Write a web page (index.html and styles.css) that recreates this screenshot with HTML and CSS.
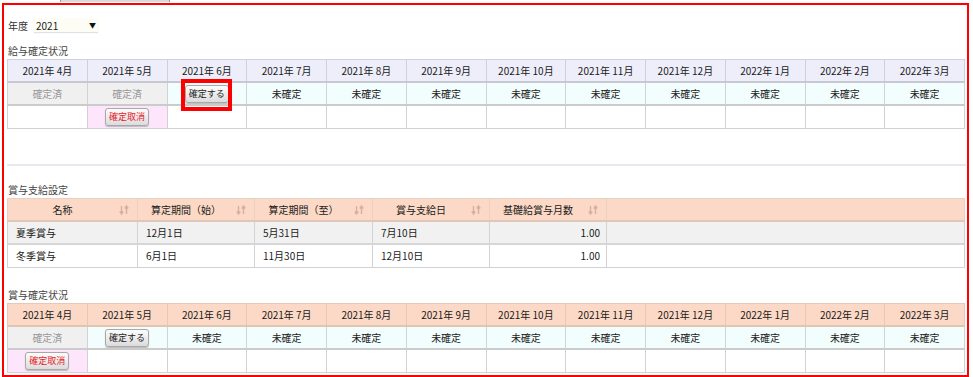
FILE: index.html
```html
<!DOCTYPE html>
<html>
	<head>
		<meta charset="utf-8">
		<link rel="stylesheet" href="styles.css">
	</head>
	<body>
		<div class="tab"></div>
		<div class="frame">
			<div class="year">
				<span class="year-label">年度</span>
				<div class="select"><span>2021</span><span class="arrow">▼</span></div>
			</div>

			<div class="caption first">給与確定状況</div>
			<table class="grid months">
				<tr class="head">
					<td>2021年 4月</td><td>2021年 5月</td><td>2021年 6月</td><td>2021年 7月</td>
					<td>2021年 8月</td><td>2021年 9月</td><td>2021年 10月</td><td>2021年 11月</td>
					<td>2021年 12月</td><td>2022年 1月</td><td>2022年 2月</td><td>2022年 3月</td>
				</tr>
				<tr class="state">
					<td class="done">確定済</td>
					<td class="done">確定済</td>
					<td class="mark"><button class="btn">確定する</button><div class="highlight"></div></td>
					<td>未確定</td><td>未確定</td><td>未確定</td><td>未確定</td><td>未確定</td>
					<td>未確定</td><td>未確定</td><td>未確定</td><td>未確定</td>
				</tr>
				<tr class="action">
					<td></td>
					<td class="pink"><button class="btn cancel">確定取消</button></td>
					<td></td><td></td><td></td><td></td><td></td><td></td><td></td><td></td><td></td><td></td>
				</tr>
			</table>

			<div class="separator"></div>

			<div class="caption second">賞与支給設定</div>
			<table class="grid bonus">
				<colgroup>
					<col style="width:130px"><col style="width:117px"><col style="width:118px">
					<col style="width:117px"><col style="width:117px"><col>
				</colgroup>
				<tr class="head">
					<td class="sort">名称<svg class="icon" viewBox="0 0 10 10"><path d="M2.5 1v8M0.8 6.5l1.7 2.5 1.7-2.5M7.5 9V1M5.8 3.5l1.7-2.5 1.7 2.5"/></svg></td>
					<td class="sort">算定期間（始）<svg class="icon" viewBox="0 0 10 10"><path d="M2.5 1v8M0.8 6.5l1.7 2.5 1.7-2.5M7.5 9V1M5.8 3.5l1.7-2.5 1.7 2.5"/></svg></td>
					<td class="sort">算定期間（至）<svg class="icon" viewBox="0 0 10 10"><path d="M2.5 1v8M0.8 6.5l1.7 2.5 1.7-2.5M7.5 9V1M5.8 3.5l1.7-2.5 1.7 2.5"/></svg></td>
					<td class="sort">賞与支給日<svg class="icon" viewBox="0 0 10 10"><path d="M2.5 1v8M0.8 6.5l1.7 2.5 1.7-2.5M7.5 9V1M5.8 3.5l1.7-2.5 1.7 2.5"/></svg></td>
					<td class="sort">基礎給賞与月数<svg class="icon" viewBox="0 0 10 10"><path d="M2.5 1v8M0.8 6.5l1.7 2.5 1.7-2.5M7.5 9V1M5.8 3.5l1.7-2.5 1.7 2.5"/></svg></td>
					<td></td>
				</tr>
				<tr class="odd">
					<td>夏季賞与</td><td>12月1日</td><td>5月31日</td><td>7月10日</td><td class="num">1.00</td><td></td>
				</tr>
				<tr class="even">
					<td>冬季賞与</td><td>6月1日</td><td>11月30日</td><td>12月10日</td><td class="num">1.00</td><td></td>
				</tr>
			</table>

			<div class="caption third">賞与確定状況</div>
			<table class="grid months peach">
				<tr class="head">
					<td>2021年 4月</td><td>2021年 5月</td><td>2021年 6月</td><td>2021年 7月</td>
					<td>2021年 8月</td><td>2021年 9月</td><td>2021年 10月</td><td>2021年 11月</td>
					<td>2021年 12月</td><td>2022年 1月</td><td>2022年 2月</td><td>2022年 3月</td>
				</tr>
				<tr class="state">
					<td class="done">確定済</td>
					<td><button class="btn">確定する</button></td>
					<td>未確定</td><td>未確定</td><td>未確定</td><td>未確定</td><td>未確定</td><td>未確定</td>
					<td>未確定</td><td>未確定</td><td>未確定</td><td>未確定</td>
				</tr>
				<tr class="action">
					<td class="pink"><button class="btn cancel">確定取消</button></td>
					<td></td><td></td><td></td><td></td><td></td><td></td><td></td><td></td><td></td><td></td><td></td>
				</tr>
			</table>
		</div>
	</body>
</html>
```

FILE: styles.css
```css
body {
	margin: 0;
	background: #FFF;
	font-family: "Noto Sans CJK JP", "Liberation Sans", sans-serif;
	font-size: 10px;
	color: #333;
}

.tab {
	margin-left: 60px;
	width: 108px;
	height: 2px;
	background: #DADADA;
	border-left: 1px solid #999;
	border-right: 1px solid #999;
	margin-bottom: 1px;
}

.frame {
	position: relative;
	margin-left: 2px;
	width: 959px;
	border: 2px solid #F00;
	padding: 0 1px 2px 3px;
}

.year {
	display: flex;
	align-items: center;
	height: 14px;
	margin-top: 13px;
	padding-left: 1px;
}

.year-label {
	margin-right: 6px;
}

.select {
	display: flex;
	justify-content: space-between;
	align-items: center;
	width: 60px;
	height: 14px;
	padding: 0 2px;
	background: #FDFDF6;
	box-shadow: 0 1px 1px #DDE3E8;
	color: #222;
}

.select .arrow {
	font-size: 7px;
	color: #111;
}

.caption {
	height: 14px;
	line-height: 14px;
	padding-left: 1px;
	color: #444;
}

.caption.first {
	margin-top: 12px;
	margin-bottom: 1px;
}

.caption.second {
	margin-top: 17px;
	margin-bottom: 1px;
}

.caption.third {
	margin-top: 20px;
	margin-bottom: 1px;
}

.separator {
	margin-top: 35px;
	height: 2px;
	background: #E6E9F0;
}

.grid {
	width: 958px;
	border-collapse: collapse;
	table-layout: fixed;
	font-size: 10px;
}

.grid td {
	height: 22px;
	padding: 0;
	border: 1px solid #D2D2D6;
	text-align: center;
	color: #1A1A1A;
	white-space: nowrap;
	line-height: 12px;
}

.months .head td {
	height: 21px;
	background: #EEEEFA;
	border-color: #CFCFE0;
	border-bottom: 2px solid #C8C8D2;
}

.months .state td {
	height: 21px;
	background: #F2FDFD;
	border-bottom: 2px solid #CBCBCB;
}

.months .state td.done {
	background: #F0F0F0;
	color: #999;
}

.months .action td {
	background: #FFF;
}

.months .action td.pink {
	background: #FDE6FC;
}

.peach .head td {
	background: #FCD9C6;
	border-color: #E6C8B8;
	border-bottom: 2px solid #E2C4B2;
}

.mark {
	position: relative;
}

.highlight {
	position: absolute;
	left: 13px;
	top: -4px;
	width: 43px;
	height: 24px;
	border: 4px solid #F00;
}

.btn {
	font-family: inherit;
	font-size: 9px;
	line-height: 12px;
	height: 18px;
	padding: 0 3px;
	border: 1px solid #A8A8A8;
	border-radius: 3px;
	background: linear-gradient(#FCFCFC, #DCDCDC);
	box-shadow: 0 1px 1px #BBB;
	color: #222;
	vertical-align: middle;
}

.btn.cancel {
	color: #E8202A;
}

.bonus .head td {
	height: 21px;
	background: #FCD9C6;
	border-color: #E8D0C2;
	border-bottom: 2px solid #E0C6B6;
}

.bonus .head td.sort {
	position: relative;
	padding-right: 20px;
}

.icon {
	position: absolute;
	right: 8px;
	top: 6px;
	width: 10px;
	height: 10px;
	fill: none;
	stroke: #D8AE9C;
	stroke-width: 1.4;
}

.bonus .odd td {
	height: 21px;
	background: #F1F1F1;
	border-bottom: 2px solid #D6D6D6;
}

.bonus .even td {
	background: #FFF;
}

.bonus tr:not(.head) td {
	text-align: left;
	padding-left: 8px;
}

.bonus tr:not(.head) td.num {
	text-align: right;
	padding-right: 6px;
}
```
